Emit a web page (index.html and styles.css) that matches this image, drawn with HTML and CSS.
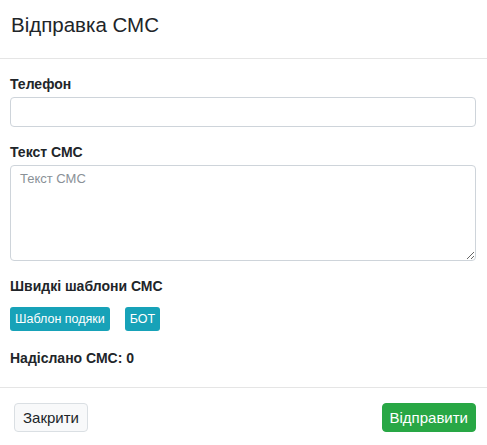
FILE: index.html
```html
<!DOCTYPE html>
<html lang="uk">
<head>
<meta charset="utf-8">
<title>Відправка СМС</title>
<link rel="stylesheet" href="styles.css">
</head>
<body>
<div class="modal">
  <div class="modal-header">
    <h5 class="modal-title">Відправка СМС</h5>
  </div>
  <div class="modal-body">
    <label class="label" for="phone">Телефон</label>
    <input class="input" id="phone" type="text">
    <label class="label label-gap" for="text">Текст СМС</label>
    <textarea class="textarea" id="text" placeholder="Текст СМС"></textarea>
    <div class="label label-gap">Швидкі шаблони СМС</div>
    <div class="templates">
      <button class="btn-sm">Шаблон подяки</button>
      <button class="btn-sm">БОТ</button>
    </div>
    <div class="label sent">Надіслано СМС: 0</div>
  </div>
  <div class="modal-footer">
    <button class="btn btn-light">Закрити</button>
    <button class="btn btn-success">Відправити</button>
  </div>
</div>
</body>
</html>
```

FILE: styles.css
```css
* { box-sizing: border-box; }
html, body { margin: 0; padding: 0; background: #fff; }
body {
  font-family: "Liberation Sans", Arial, sans-serif;
  color: #212529;
  font-size: 14px;
}
.modal { width: 487px; }
.modal-header {
  height: 59px;
  padding: 10px 10px 0 11px;
  border-bottom: 1px solid #e5e5e5;
}
.modal-title {
  margin: 0;
  font-size: 20.5px;
  font-weight: normal;
  line-height: 30px;
}
.modal-body {
  padding: 15px 11px 18px 10px;
  display: flex;
  flex-direction: column;
}
.label {
  font-weight: bold;
  font-size: 14px;
  line-height: 21px;
  display: block;
  margin-bottom: 2px;
}
.label-gap { margin-top: 15px; }
.input {
  display: block;
  width: 100%;
  height: 30px;
  border: 1px solid #ced4da;
  border-radius: 4px;
  font: inherit;
  padding: 4px 9px;
}
.textarea {
  display: block;
  width: 100%;
  height: 96px;
  border: 1px solid #ced4da;
  border-radius: 4px;
  font-family: "Liberation Sans", Arial, sans-serif;
  font-size: 13px;
  line-height: 18px;
  padding: 4px 9px;
  resize: vertical;
}
.textarea::placeholder { color: #8a9197; }
.templates {
  display: flex;
  gap: 15px;
  margin-top: 8px;
}
.btn-sm {
  background: #17a2b8;
  color: #fff;
  border: 0;
  border-radius: 3px;
  font-family: "Liberation Sans", Arial, sans-serif;
  font-size: 12.5px;
  line-height: 24px;
  height: 24px;
  padding: 0 5px;
}
.sent { margin-top: 17px; margin-bottom: 0; }
.modal-footer {
  border-top: 1px solid #e5e5e5;
  padding: 15px 11px 0 14px;
  display: flex;
  justify-content: space-between;
  align-items: flex-start;
}
.btn {
  font-family: "Liberation Sans", Arial, sans-serif;
  font-size: 15px;
  line-height: 21px;
  padding: 3px 8px;
  border-radius: 4px;
  border: 1px solid transparent;
}
.btn-light {
  background: #f8f9fa;
  border-color: #dadfe3;
  color: #212529;
}
.btn-success {
  background: #28a745;
  border-color: #28a745;
  color: #fff;
  padding: 3px 7px;
}
```
